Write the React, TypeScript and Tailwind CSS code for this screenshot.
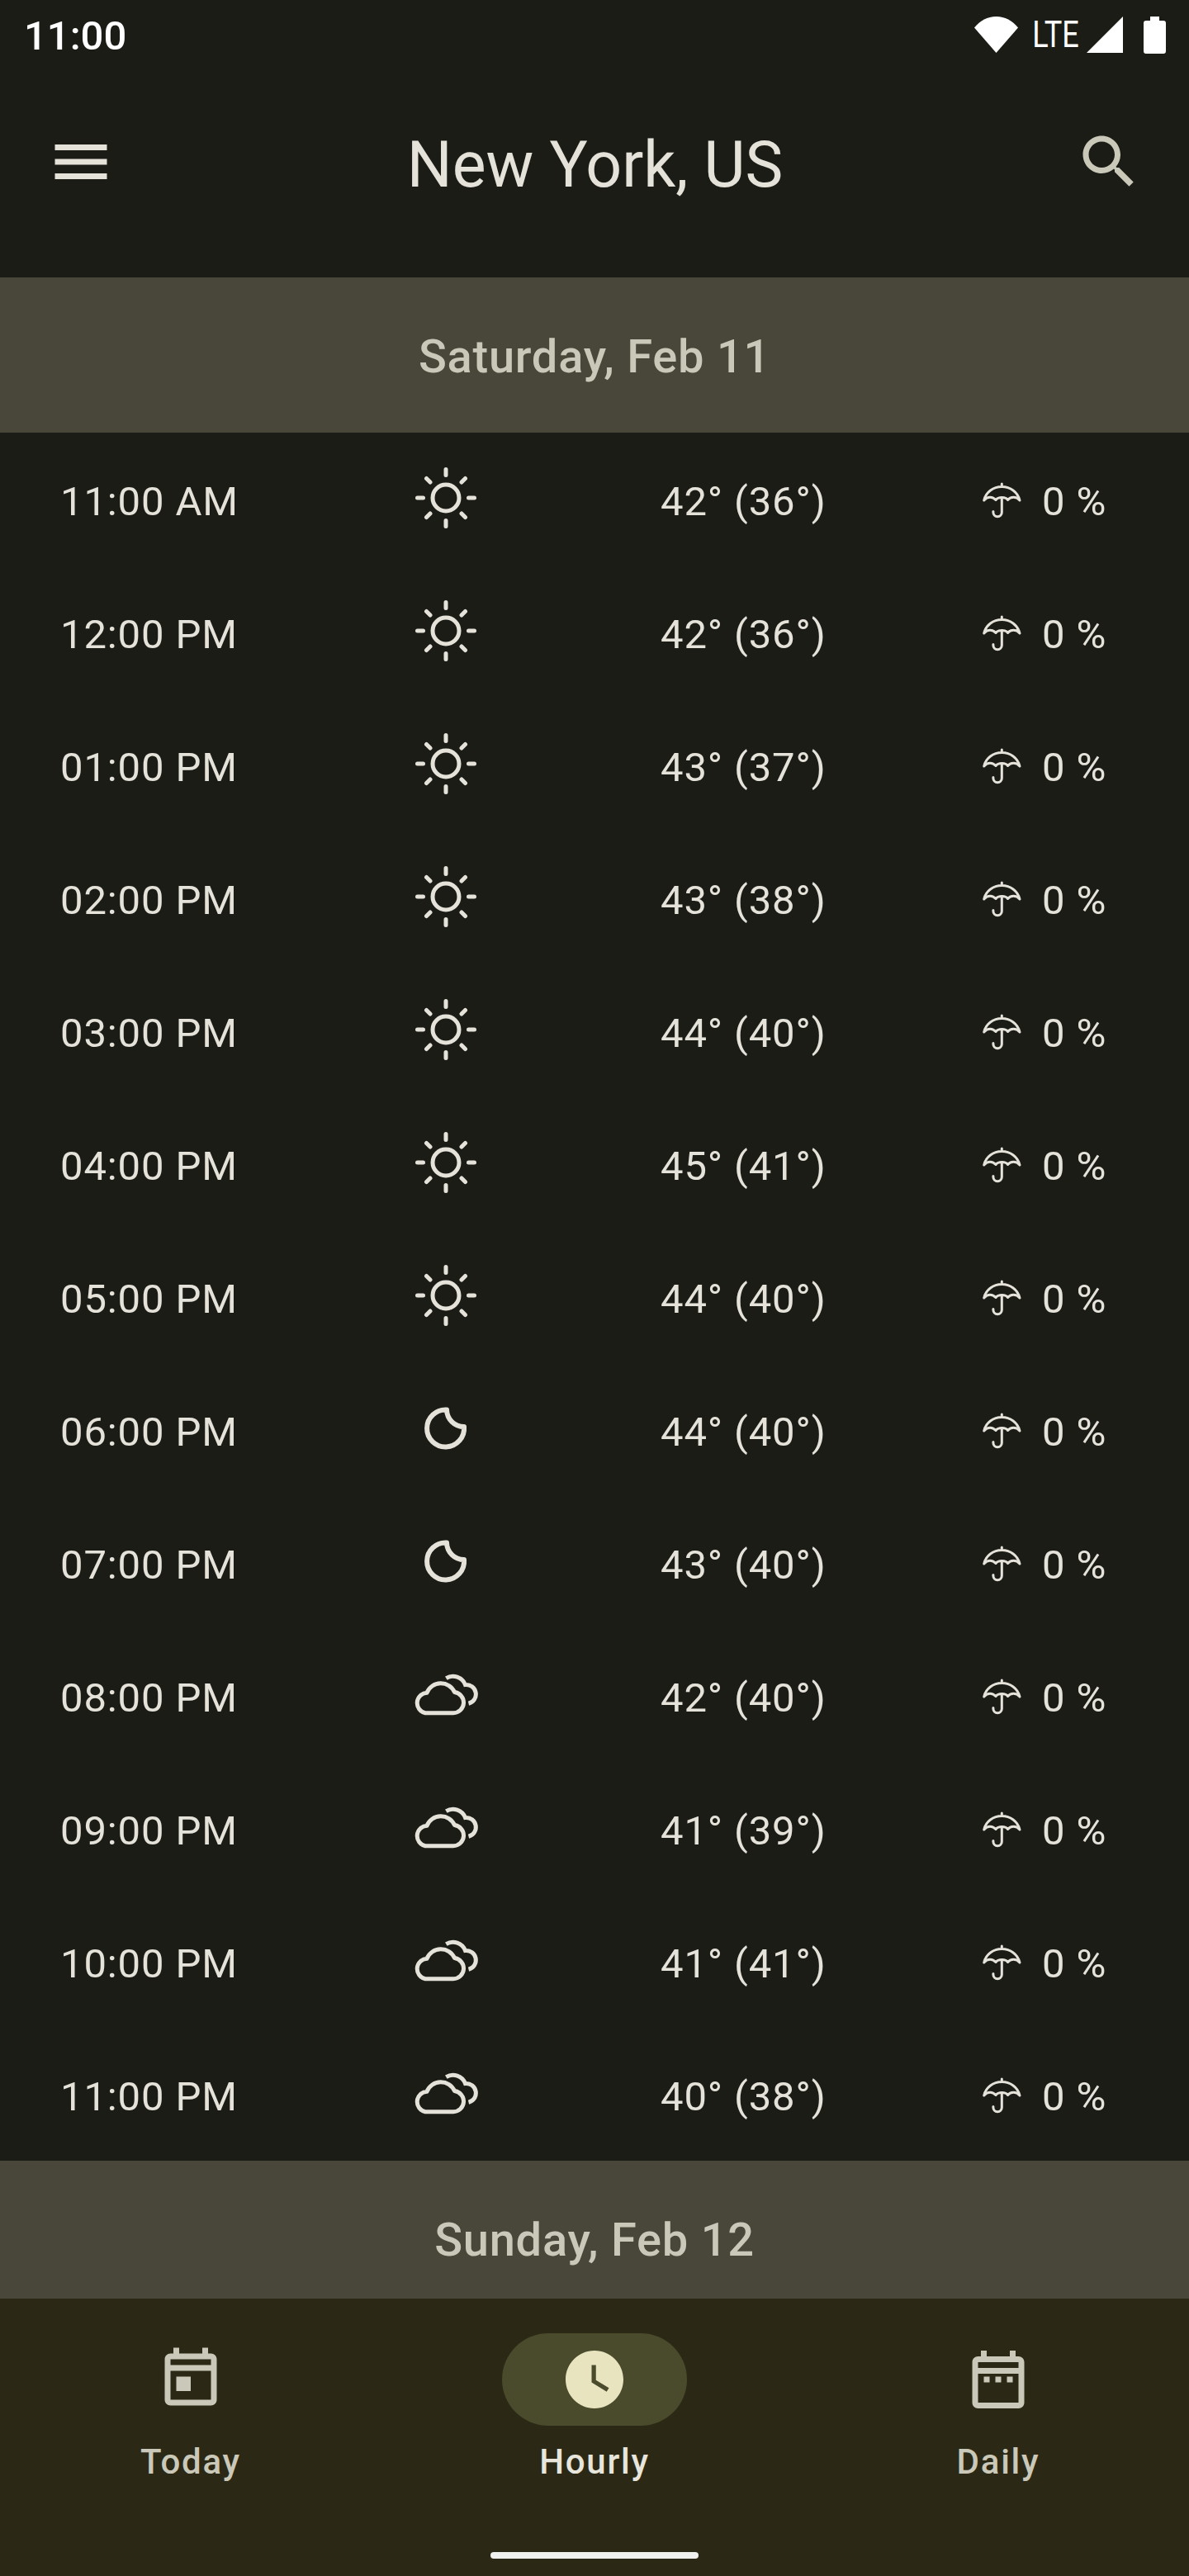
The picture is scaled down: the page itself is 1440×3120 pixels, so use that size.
const HOURS = [
  { time: '11:00 AM', icon: 'sun', temp: '42° (36°)' },
  { time: '12:00 PM', icon: 'sun', temp: '42° (36°)' },
  { time: '01:00 PM', icon: 'sun', temp: '43° (37°)' },
  { time: '02:00 PM', icon: 'sun', temp: '43° (38°)' },
  { time: '03:00 PM', icon: 'sun', temp: '44° (40°)' },
  { time: '04:00 PM', icon: 'sun', temp: '45° (41°)' },
  { time: '05:00 PM', icon: 'sun', temp: '44° (40°)' },
  { time: '06:00 PM', icon: 'moon', temp: '44° (40°)' },
  { time: '07:00 PM', icon: 'moon', temp: '43° (40°)' },
  { time: '08:00 PM', icon: 'cloud', temp: '42° (40°)' },
  { time: '09:00 PM', icon: 'cloud', temp: '41° (39°)' },
  { time: '10:00 PM', icon: 'cloud', temp: '41° (41°)' },
  { time: '11:00 PM', icon: 'cloud', temp: '40° (38°)' },
]

function WeatherIcon({ kind }: { kind: string }) {
  return (
    <svg viewBox="0 0 80 80" className="w-20 h-20 mb-[3px]" fill="none" stroke="#e5e2da" strokeWidth="5" strokeLinecap="round">
      {kind === 'sun' && (
        <>
          <circle cx="40" cy="40" r="16" />
          <path d="M40 5.500V12.500M40 67.500V74.500M5.500 40H12.500M67.500 40H74.500M16.500 16.500L21 21M59 59L63.500 63.500M16.500 63.500L21 59M59 21L63.500 16.500" />
        </>
      )}
      {kind === 'moon' && (
        <path strokeWidth="6" strokeLinejoin="round" strokeLinecap="butt" d="M41 17.500A22.500 22.500 0 1 0 62 38A21 21 0 0 1 41 17.500Z" />
      )}
      {kind === 'cloud' && (
        <g transform="translate(1 0)">
          <path strokeLinejoin="round" d="M14 62.700H48A12.600 12.600 0 0 0 49.500 37.600A18.200 18.200 0 0 0 16 38.200A12.400 12.400 0 0 0 14 62.700Z" />
          <path strokeLinecap="butt" d="M39.300 20.600A16 16 0 0 1 62.500 28.500A11.600 11.600 0 0 1 66.500 51.300" />
        </g>
      )}
    </svg>
  )
}

function Umbrella() {
  return (
    <svg viewBox="0 0 48 44" className="w-12 h-11 mt-[2px]" fill="none" stroke="#e5e2da" strokeWidth="3" strokeLinecap="round" strokeLinejoin="round">
      <path d="M24.300 5.500V2M2.700 22C5 12 14 5.500 24.300 5.500S43.500 12 46 22C42 17 35 17 31.500 21.500C29 17.500 20 17.500 17 21.500C13 17 7 17 2.700 22Z" />
      <path d="M24.300 20V36.500A5.200 5.200 0 0 1 13.900 36.500V35.500" />
    </svg>
  )
}

function DateBand({ label }: { label: string }) {
  return (
    <div className="h-[188px] shrink-0 flex items-center justify-center pt-1 bg-[#494739] text-[#cac8b8] text-[56px] font-medium tracking-[0.75px]">
      {label}
    </div>
  )
}

function NavItem({ label, path, active }: { label: string; path: string; active?: boolean }) {
  return (
    <div className="w-[224px] flex flex-col items-center">
      <div className={`w-[224px] h-[112px] rounded-full flex items-center justify-center ${active ? 'bg-[#4a4a2d]' : ''}`}>
        <svg viewBox="0 0 24 24" className="w-[84px] h-[84px]" fill={active ? '#e8e4bf' : '#cac8b8'}>
          <path d={path} />
        </svg>
      </div>
      <span className={`mt-4 text-[42px] leading-[56px] font-medium tracking-[1.75px] ${active ? 'text-[#e8e6dc]' : 'text-[#cac8b8]'}`}>
        {label}
      </span>
    </div>
  )
}

export default function App() {
  return (
    <div className="w-[1440px] h-[3120px] overflow-hidden flex flex-col bg-[#1c1c17] font-['Roboto',sans-serif] text-[#e5e2da]">
      <div className="h-[84px] shrink-0 flex items-center justify-between pl-[29px] pr-[28px] text-white">
        <span className="pt-[3px] text-[49px] font-medium">11:00</span>
        <div className="flex items-center">
          <svg viewBox="0 0 53 44" className="w-[53px] h-11">
            <path fill="#fff" d="M0 13.500C7 5 16 0 26.500 0S46 5 53 13.500L26.500 44Z" />
          </svg>
          <span className="w-[57px] ml-[17px] flex justify-center text-[44px] leading-[44px] scale-x-[.82]">LTE</span>
          <svg viewBox="0 0 44 44" className="w-11 h-11 ml-[9px]">
            <path fill="#fff" d="M0 44L44 0V44Z" />
          </svg>
          <svg viewBox="0 0 27 45" className="w-[27px] h-[45px] ml-[25px]">
            <path fill="#fff" d="M8 0H19V5H24A3 3 0 0 1 27 8V42A3 3 0 0 1 24 45H3A3 3 0 0 1 0 42V8A3 3 0 0 1 3 5H8Z" />
          </svg>
        </div>
      </div>
      <div className="h-[252px] shrink-0 pb-[28px] pl-14 pr-[55px] flex items-center">
        <svg viewBox="0 0 24 24" className="w-[84px] h-[84px]" fill="#e5e2da">
          <path d="M3 18h18v-2H3v2zm0-5h18v-2H3v2zm0-5h18V6H3v2z" />
        </svg>
        <h1 className="flex-1 text-center pt-[10px] text-[77px] font-normal">New York, US</h1>
        <svg viewBox="0 0 24 24" className="w-[84px] h-[84px]" fill="#cac8b8">
          <path d="M15.500 14h-.79l-.28-.27C15.410 12.590 16 11.110 16 9.500 16 5.910 13.090 3 9.500 3S3 5.910 3 9.500 5.910 16 9.500 16c1.610 0 3.090-.59 4.230-1.570l.27.280v.790l5 4.990L20.490 19l-4.990-5zm-6 0C7.010 14 5 11.990 5 9.500S7.010 5 9.500 5 14 7.010 14 9.500 11.990 14 9.500 14z" />
        </svg>
      </div>
      <div className="flex-1 min-h-0 overflow-hidden">
        <DateBand label="Saturday, Feb 11" />
        {HOURS.map((h) => (
          <div key={h.time} className="h-[161px] flex items-center pl-[73px] text-[49px] tracking-[0.875px]">
            <span className="w-[427px] pt-[6px]">{h.time}</span>
            <WeatherIcon kind={h.icon} />
            <span className="ml-[220px] w-[389px] pt-[6px]">{h.temp}</span>
            <Umbrella />
            <span className="ml-[25px] pt-[6px]">0 %</span>
          </div>
        ))}
        <DateBand label="Sunday, Feb 12" />
      </div>
      <div className="h-[336px] shrink-0 bg-[#2b2915] flex flex-col items-center">
        <div className="w-full flex justify-between px-[119px] pt-[42px]">
          <NavItem label="Today" path="M19 3h-1V1h-2v2H8V1H6v2H5c-1.110 0-1.990.9-1.990 2L3 19c0 1.100.89 2 2 2h14c1.100 0 2-.9 2-2V5c0-1.100-.9-2-2-2zm0 16H5V9h14v10zm0-12H5V5h14v2zM7 11h5v5H7z" />
          <NavItem active label="Hourly" path="M12 2C6.500 2 2 6.500 2 12s4.500 10 10 10 10-4.500 10-10S17.500 2 12 2zm4.200 14.200L11 13V7h1.500v5.200l4.500 2.700-.8 1.300z" />
          <NavItem label="Daily" path="M7 11h2v2H7zm14-5v14c0 1.100-.9 2-2 2H5c-1.110 0-2-.9-2-2l.01-14c0-1.100.88-2 1.990-2h1V2h2v2h8V2h2v2h1c1.100 0 2 .9 2 2zM5 8h14V6H5v2zm14 12V10H5v10h14zm-4-7h2v-2h-2v2zm-4 0h2v-2h-2v2z" />
        </div>
        <div className="mt-auto mb-[21px] w-[252px] h-2 rounded-full bg-[#f0f0ee]" />
      </div>
    </div>
  )
}
